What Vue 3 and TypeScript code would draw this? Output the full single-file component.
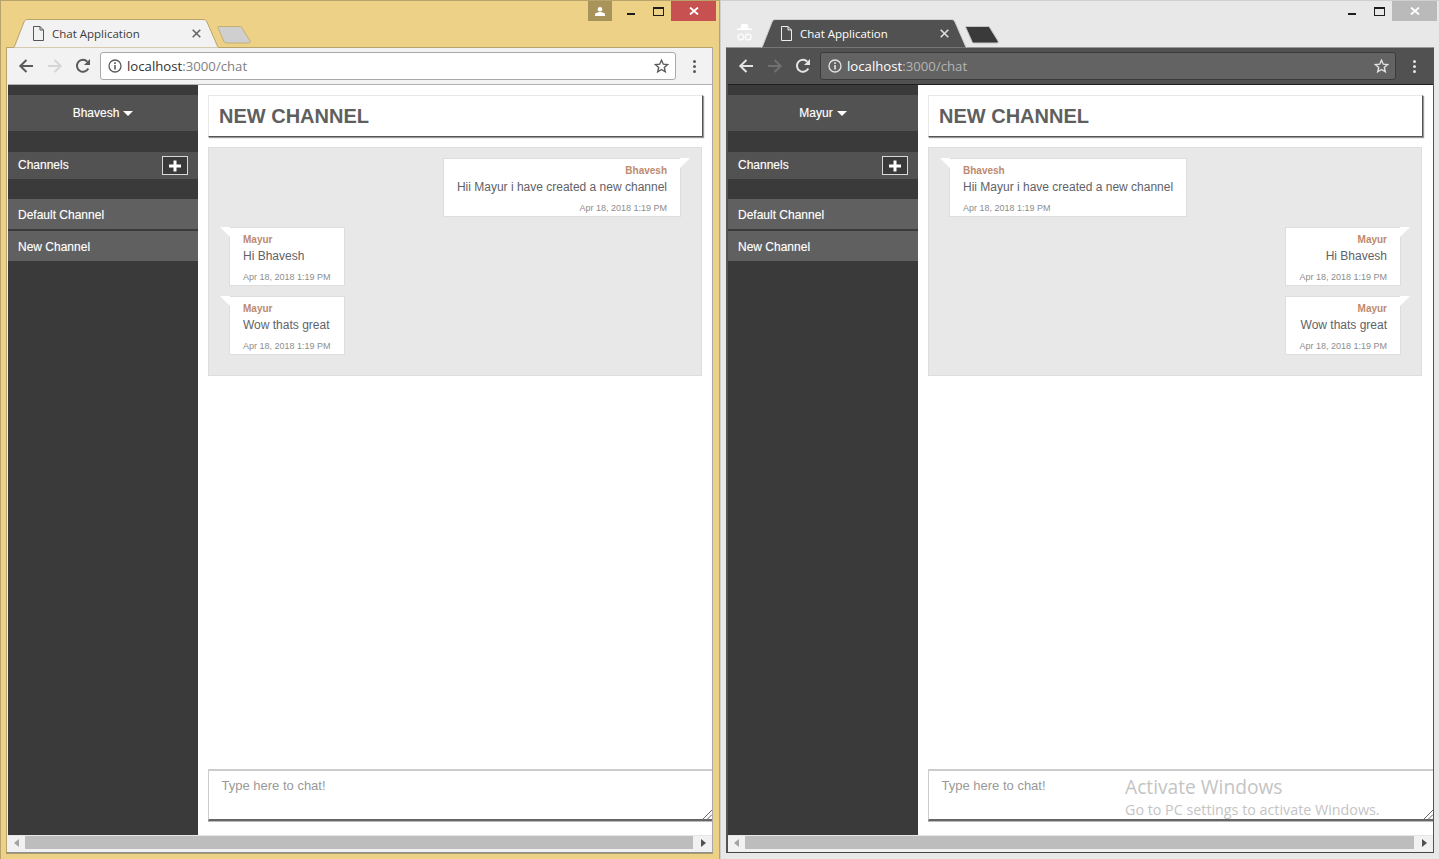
<script setup lang="ts">
interface Message {
  author: string;
  text: string;
  time: string;
  mine: boolean;
}

interface ChatWindow {
  user: string;
  dark: boolean;
  messages: Message[];
}

const TIME = "Apr 18, 2018 1:19 PM";
const CHANNELS = ["Default Channel", "New Channel"];

const windows: ChatWindow[] = [
  {
    user: "Bhavesh",
    dark: false,
    messages: [
      { author: "Bhavesh", text: "Hii Mayur i have created a new channel", time: TIME, mine: true },
      { author: "Mayur", text: "Hi Bhavesh", time: TIME, mine: false },
      { author: "Mayur", text: "Wow thats great", time: TIME, mine: false },
    ],
  },
  {
    user: "Mayur",
    dark: true,
    messages: [
      { author: "Bhavesh", text: "Hii Mayur i have created a new channel", time: TIME, mine: false },
      { author: "Mayur", text: "Hi Bhavesh", time: TIME, mine: true },
      { author: "Mayur", text: "Wow thats great", time: TIME, mine: true },
    ],
  },
];
</script>

<template>
  <div class="desktop">
    <section v-for="win in windows" :key="win.user" class="window" :class="{ dark: win.dark }">
      <header class="titlebar">
        <svg v-if="win.dark" class="incognito" width="15" height="17" viewBox="0 0 15 17">
          <path d="M4.500 0h6l1 4.500h3.500v1.500H0V4.500h3.500z" fill="#fff" />
          <circle cx="3.800" cy="13" r="2.900" fill="none" stroke="#fff" stroke-width="1.200" />
          <circle cx="11.200" cy="13" r="2.900" fill="none" stroke="#fff" stroke-width="1.200" />
        </svg>
        <div class="tab">
          <svg class="tab-shape" width="206" height="29" viewBox="0 0 206 29">
            <path class="tab-fill" d="M0 28.500 C1 28.500 1.500 27.500 2 26 L11 3 C11.800 1.200 12.800 0.500 15 0.500 H190 C192 0.500 193 1.200 194 3 L204 26 C204.500 27.500 205 28.500 206 28.500" />
          </svg>
          <svg class="page-icon" width="11" height="15" viewBox="0 0 11 15">
            <path d="M.5 .5h6.500l3.500 3.500v10.500H.5zM7 .5v3.500h3.500" fill="none" stroke="currentColor" />
          </svg>
          <span class="tab-title">Chat Application</span>
          <svg class="tab-close" width="9" height="9" viewBox="0 0 9 9">
            <path d="M.7.7l7.600 7.600M8.300.7L.7 8.300" stroke="currentColor" stroke-width="1.600" />
          </svg>
        </div>
        <svg class="new-tab" width="36" height="18" viewBox="0 0 36 18">
          <path d="M1.500.5H23c1 0 1.500.5 2 1.500l8 13c.5 1 0 2-1 2H9c-1 0-1.500-.5-2-1.500L.8 1.500C.6 1 1 .5 1.500.5z" />
        </svg>
        <div class="controls">
          <div v-if="!win.dark" class="avatar">
            <svg width="10" height="9" viewBox="0 0 10 9">
              <circle cx="5" cy="2.300" r="2.300" fill="#fff" />
              <path d="M0 9V7.300C0 6 3 5 5 5s5 1 5 2.300V9z" fill="#fff" />
            </svg>
          </div>
          <div class="minimize"></div>
          <div class="maximize"></div>
          <div class="close">
            <svg width="10" height="8" viewBox="0 0 10 8">
              <path d="M1 .5l8 7M9 .5l-8 7" stroke="#fff" stroke-width="1.800" />
            </svg>
          </div>
        </div>
      </header>

      <div class="frame">
        <nav class="toolbar">
          <svg class="tool" width="16" height="16" viewBox="0 0 16 16">
            <path d="M15 8H2.500M8.500 2L2.300 8l6.200 6" fill="none" stroke="currentColor" stroke-width="2" />
          </svg>
          <svg class="tool forward" width="16" height="16" viewBox="0 0 16 16">
            <path d="M1 8h12.500M7.500 2l6.200 6-6.200 6" fill="none" stroke="currentColor" stroke-width="2" />
          </svg>
          <svg class="tool" width="16" height="16" viewBox="0 0 16 16">
            <path d="M13.300 10.500A6 6 0 1 1 12.300 3.600" fill="none" stroke="currentColor" stroke-width="2" />
            <path d="M15 1v6H9z" fill="currentColor" />
          </svg>
          <div class="omnibox">
            <svg class="info" width="14" height="14" viewBox="0 0 14 14">
              <circle cx="7" cy="7" r="6" fill="none" stroke="currentColor" stroke-width="1.300" />
              <path d="M6.200 6h1.600v4.500H6.200zM6.200 3.300h1.600v1.600H6.200z" fill="currentColor" />
            </svg>
            <span class="host">localhost</span><span class="path">:3000/chat</span>
            <svg class="star" width="15" height="14" viewBox="0 0 15 14">
              <path d="M7.500 1.200l1.800 4 4.300.4-3.300 2.900 1 4.300-3.800-2.300-3.800 2.300 1-4.300L1.400 5.600l4.300-.4z" fill="none" stroke="currentColor" stroke-width="1.400" />
            </svg>
          </div>
          <div class="dots"><i></i><i></i><i></i></div>
        </nav>

        <div class="page">
          <aside class="sidebar">
            <div class="user">
              <span>{{ win.user }}</span><b class="caret"></b>
            </div>
            <div class="channels-head">
              <span>Channels</span>
              <button class="add" type="button">
                <svg width="12" height="12" viewBox="0 0 12 12">
                  <path d="M4.500 .5h3v4h4.500v3H7.500v4h-3v-4H0v-3h4.500z" fill="#fff" />
                </svg>
              </button>
            </div>
            <ul class="channel-list">
              <li v-for="channel in CHANNELS" :key="channel">{{ channel }}</li>
            </ul>
          </aside>

          <main class="main">
            <h1 class="heading">NEW CHANNEL</h1>
            <div class="messages">
              <article
                v-for="(msg, i) in win.messages"
                :key="i"
                class="bubble"
                :class="msg.mine ? 'mine' : 'theirs'"
              >
                <div class="author">{{ msg.author }}</div>
                <div class="text">{{ msg.text }}</div>
                <div class="time">{{ msg.time }}</div>
              </article>
            </div>
            <div class="spacer"></div>
            <div class="composer">
              <span class="placeholder">Type here to chat!</span>
              <div v-if="win.dark" class="activate">
                <div class="activate-title">Activate Windows</div>
                <div class="activate-sub">Go to PC settings to activate Windows.</div>
              </div>
              <svg class="resizer" width="9" height="9" viewBox="0 0 9 9">
                <path d="M0 9l9-9M4.500 9L9 4.500" stroke="#666" stroke-width="1" />
              </svg>
            </div>
          </main>
        </div>

        <div class="scrollbar">
          <span class="arrow left"></span>
          <div class="thumb"></div>
          <span class="arrow right"></span>
        </div>
      </div>
    </section>
  </div>
</template>

<style>
html,
body {
  margin: 0;
  overflow: hidden;
}
</style>

<style scoped>
.desktop {
  display: flex;
  width: 1439px;
  height: 859px;
  font-family: "Liberation Sans", Arial, sans-serif;
  overflow: hidden;
}

.window {
  --frame: #edd186;
  --frame-line: #b8a36b;
  --bar: #f2f2f2;
  --bar-line: #b1b1b1;
  --tab-bg: #f2f2f2;
  --tab-text: #3c3c3c;
  --icon: #5a5a5a;
  --icon-off: #d6d6d6;
  --box: #fff;
  --box-line: #a9a9a9;
  --host: #333;
  --path: #808080;
  display: flex;
  flex-direction: column;
  box-sizing: border-box;
  flex: 0 0 720px;
  height: 859px;
  background: var(--frame);
  border-top: 1px solid var(--frame-line);
  border-left: 1px solid var(--frame-line);
  border-right: 1px solid var(--frame-line);
  padding: 0 6px 6px 5px;
}

.window.dark {
  --frame: #e8e8e8;
  --frame-line: #cfcfcf;
  --bar: #515151;
  --bar-line: #1f1f1f;
  --tab-bg: #515151;
  --tab-text: #fff;
  --icon: #e4e4e4;
  --icon-off: #707070;
  --box: #636363;
  --box-line: #3a3a3a;
  --host: #fff;
  --path: #b5b5b5;
  flex-basis: 719px;
  padding-right: 5px;
  border-right: 0;
}

.titlebar {
  position: relative;
  display: flex;
  align-items: flex-end;
  height: 46px;
  flex: none;
}

.tab {
  position: relative;
  display: flex;
  align-items: center;
  box-sizing: border-box;
  width: 206px;
  height: 29px;
  margin: 0 0 -1px 7px;
  padding: 0 18px 0 20px;
  color: var(--tab-text);
}

.dark .tab {
  margin-left: 35px;
}

.tab-shape {
  position: absolute;
  left: 0;
  bottom: 0;
}

.tab-fill {
  fill: var(--tab-bg);
  stroke: var(--frame-line);
}

.page-icon,
.tab-title,
.tab-close {
  position: relative;
}

.page-icon {
  color: #555;
}

.dark .page-icon {
  color: #eee;
}

.tab-title {
  margin-left: 8px;
  font-family: "Open Sans", sans-serif;
  font-size: 11.500px;
  white-space: nowrap;
  flex: 1;
}

.tab-close {
  color: #666;
}

.dark .tab-close {
  color: #ddd;
}

.incognito {
  position: absolute;
  left: 11px;
  bottom: 6px;
}

.new-tab {
  margin: 0 0 3px -2px;
  fill: #cfcfcf;
  stroke: #c2ae72;
}

.dark .new-tab {
  fill: #3a3a3a;
  stroke: #c4c4c4;
}

.controls {
  position: absolute;
  top: 0;
  right: -3px;
  display: flex;
  align-items: flex-start;
}

.avatar {
  display: flex;
  align-items: center;
  justify-content: center;
  width: 24px;
  height: 20px;
  background: #a8935a;
  margin-right: 15px;
}

.minimize {
  width: 8px;
  height: 2px;
  margin: 12px 18px 0 0;
  background: #1d1d1d;
}

.maximize {
  box-sizing: border-box;
  width: 11px;
  height: 9px;
  margin: 6px 7px 0 0;
  border: 1px solid #1d1d1d;
  border-top-width: 2px;
}

.close {
  display: flex;
  align-items: center;
  justify-content: center;
  width: 45px;
  height: 20px;
  background: #c75050;
}

.dark .close {
  background: #bababa;
}

.frame {
  flex: 1;
  display: flex;
  flex-direction: column;
  min-height: 0;
  background: var(--bar);
  border-top: 1px solid var(--frame-line);
  border-left: 1px solid var(--frame-line);
  border-right: 1px solid #a9a9a9;
  border-bottom: 1px solid #8f8f8f;
  box-shadow: 0 1px 0 #a89a6e;
  border-radius: 1px 1px 0 0;
}

.dark .frame {
  border-top-color: #9a9a9a;
  border-left-color: #555;
  border-right-color: #555;
  border-bottom-color: #444;
  box-shadow: none;
}

.toolbar {
  display: flex;
  align-items: center;
  box-sizing: border-box;
  flex: none;
  height: 37px;
  padding-left: 10px;
  margin-left: 1px;
  border-bottom: 1px solid var(--bar-line);
  color: var(--icon);
}

.tool {
  flex: none;
  margin-right: 12px;
}

.forward {
  margin-left: 1px;
  color: var(--icon-off);
}

.omnibox {
  display: flex;
  align-items: center;
  box-sizing: border-box;
  flex: none;
  width: 576px;
  height: 28px;
  margin-left: -3px;
  padding: 0 6px 0 7px;
  background: var(--box);
  border: 1px solid var(--box-line);
  border-radius: 3px;
  font-family: "Open Sans", sans-serif;
  font-size: 13.200px;
}

.info {
  flex: none;
  margin-right: 5px;
}

.host {
  color: var(--host);
}

.path {
  color: var(--path);
  flex: 1;
}

.star {
  flex: none;
}

.dots {
  display: flex;
  flex-direction: column;
  gap: 2px;
  margin-left: 17px;
}

.dots i {
  display: block;
  width: 3px;
  height: 3px;
  border-radius: 50%;
  background: var(--icon);
}

.page {
  flex: 1;
  display: flex;
  min-height: 0;
  margin-left: 1px;
  background: #fff;
}

.sidebar {
  flex: none;
  width: 190px;
  padding-top: 10px;
  background: #3a3a3a;
  color: #fff;
  font-size: 12px;
  box-sizing: border-box;
  text-shadow: 0 0 1px rgba(255, 255, 255, 0.4);
}

.user {
  display: flex;
  align-items: center;
  justify-content: center;
  gap: 4px;
  height: 36px;
  background: #525252;
}

.caret {
  width: 0;
  height: 0;
  margin-top: 1px;
  border-top: 5px solid #fff;
  border-left: 5px solid transparent;
  border-right: 5px solid transparent;
}

.channels-head {
  display: flex;
  align-items: center;
  justify-content: space-between;
  height: 27px;
  margin-top: 21px;
  padding: 0 10px;
  background: #525252;
}

.channels-head span {
  margin-top: -2px;
}

.add {
  display: flex;
  align-items: center;
  justify-content: center;
  box-sizing: border-box;
  width: 26px;
  height: 19px;
  padding: 0;
  background: #3a3a3a;
  border: 1px solid #d8d8d8;
}

.channel-list {
  list-style: none;
  margin: 20px 0 0;
  padding: 0;
}

.channel-list li {
  display: flex;
  align-items: center;
  box-sizing: border-box;
  height: 30px;
  margin-bottom: 2px;
  padding: 2px 10px 0;
  background: #606060;
}

.main {
  flex: 1;
  display: flex;
  flex-direction: column;
  min-width: 0;
  padding: 10px 0 14px 10px;
}

.heading {
  box-sizing: border-box;
  height: 42px;
  width: 495px;
  margin: 0;
  padding: 0 10px;
  flex: none;
  display: flex;
  align-items: center;
  background: #fff;
  border-top: 1px solid #e8e8e8;
  border-left: 1px solid #e8e8e8;
  border-right: 1px solid #555;
  border-bottom: 1px solid #555;
  box-shadow: 1px 1px 1px #999;
  color: #5f5f5f;
  font-size: 20px;
  font-weight: 700;
}

.messages {
  box-sizing: border-box;
  display: flex;
  flex-direction: column;
  gap: 10px;
  flex: none;
  width: 494px;
  height: 229px;
  margin-top: 10px;
  padding: 10px 20px 0;
  background: #e8e8e8;
  border: 1px solid #ddd;
}

.bubble {
  position: relative;
  box-sizing: border-box;
  height: 59px;
  padding: 6px 13px 0;
  background: #fff;
  border: 1px solid #ddd;
  width: fit-content;
}

.bubble::after {
  content: "";
  position: absolute;
  top: -1px;
  width: 0;
  height: 0;
  border-top: 10px solid #fff;
}

.mine {
  align-self: flex-end;
  text-align: right;
}

.mine::after {
  left: 100%;
  border-right: 10px solid transparent;
}

.theirs {
  align-self: flex-start;
}

.theirs::after {
  right: 100%;
  border-left: 10px solid transparent;
}

.author {
  color: #bd8a6e;
  font-size: 10px;
  font-weight: 700;
  line-height: 11px;
}

.text {
  margin-top: 3px;
  color: #5f6268;
  font-size: 12px;
  line-height: 16px;
}

.time {
  margin-top: 8px;
  color: #8d8d8d;
  font-size: 9px;
  line-height: 11px;
}

.spacer {
  flex: 1;
}

.composer {
  position: relative;
  box-sizing: border-box;
  flex: none;
  height: 52px;
  padding: 5px 12.500px;
  background: #fff;
  border-top: 2px solid #ccc;
  border-left: 1px solid #ccc;
  border-bottom: 2px solid #666;
  box-shadow: 0 1px 0 #bbb;
}

.placeholder {
  color: #999;
  font-size: 13px;
}

.activate {
  position: absolute;
  left: 196px;
  top: 2px;
  color: #c4c4c4;
  font-family: "Open Sans", sans-serif;
  white-space: nowrap;
}

.activate-title {
  font-size: 19.200px;
  line-height: 27px;
}

.activate-sub {
  font-size: 14.300px;
  line-height: 19px;
}

.resizer {
  position: absolute;
  right: 0;
  bottom: 0;
}

.scrollbar {
  display: flex;
  align-items: center;
  flex: none;
  height: 17px;
  margin-left: 1px;
  border-top: 1px solid #e6e6e6;
  background: #f1f1f1;
  box-sizing: border-box;
  padding-bottom: 3px;
}

.arrow {
  width: 0;
  height: 0;
  border-top: 4px solid transparent;
  border-bottom: 4px solid transparent;
}

.arrow.left {
  margin: 0 6px;
  border-right: 5px solid #a3a3a3;
}

.arrow.right {
  margin: 0 6px 0 8px;
  border-left: 5px solid #505050;
}

.thumb {
  flex: 1;
  height: 13px;
  background: #bdbdbd;
}
</style>
